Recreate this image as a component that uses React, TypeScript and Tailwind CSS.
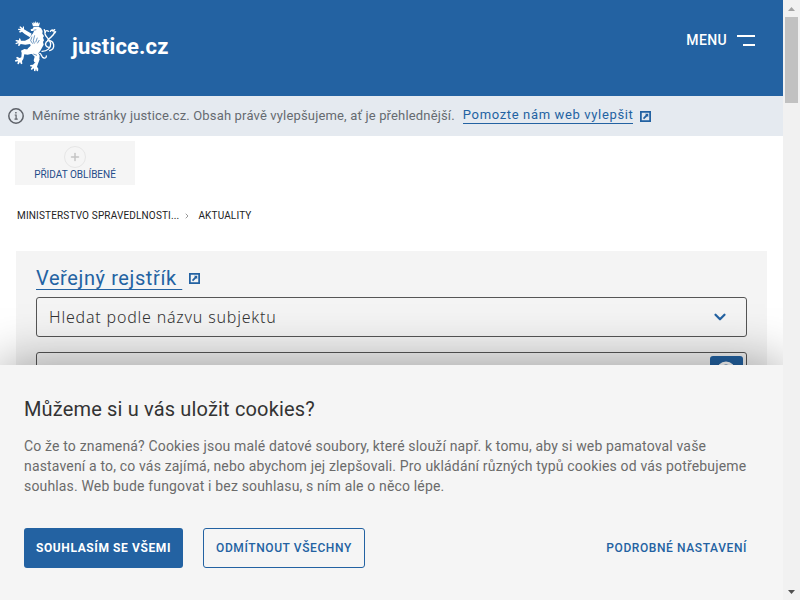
import { ChevronDown, ChevronRight, Plus, Search } from 'lucide-react'

// ─── Icons ────────────────────────────────────────────────────────────────────

function LionLogo() {
  return (
    <svg viewBox="0 0 150 180" className="h-15 w-[50px] text-white" fill="currentColor" aria-hidden="true">
      {/* crown */}
      <path d="M65 19l5 4 1-6 4 5 2-7 3 7 4-5 1 6 5-4-3 12H69z" />
      {/* head, mane and body */}
      <path d="M71 33l14-1 8 4 5 9-1 8 5 7-3 5 3 8-3 5 2 8-5 9-5 9-6 8 4 7-1 10-7 9-8 1-2-6 3-11-8-8-11-3-6-5 5-9 8-8-2-6-7-5 4-9 5-8 7-9 3-7-9 0-1-5 6-2z" />
      {/* raised front leg */}
      <path d="M60 64L44 54l-8-7-6 3-3-3 5-4-8-1 1-4 8 1-5-6 3-2 7 6 1-6 3 1 0 8 10 6 13 7z" />
      {/* lower front leg */}
      <path d="M60 84l-14 2-14-2-4 6-4-1 2-7-8 3-2-3 8-4-8-3 2-3 9 1 0-6 4 1 2 6 12 0 12-6 7 2z" />
      {/* striding back leg */}
      <path d="M66 113l-13 3-10-1-3 14-4 6 1 8-4 2-3-7-4 7-4-1 2-8-8 1-1-4 9-3-6-4 3-4 8 4 5-2 1-13-2-7 10-5 15 2 9-4z" />
      {/* standing back leg */}
      <path d="M78 122l11 8-5 13-3 9 4 6-1 8-4-1-2-7-2 8-4-1 0-8-7 5-3-3 5-7-7-1 1-4 8-1 7-7-1-8z" />
      {/* double tail */}
      <g fill="none" stroke="currentColor" strokeWidth="4" strokeLinecap="round">
        <path d="M89 112c6 0 4 12 13 14 5 1 7-2 7-6" />
        <path d="M96 106c16 0 27-10 26-23-1-13-14-18-17-29-2-8 5-13 10-8" />
        <path d="M119 104c8-2 13-9 12-18-2-12-14-16-22-8-6 8 0 16 8 16" />
        <path d="M113 73c6-9 20-13 20-24 0-8-8-9-12-3M106 49l-3-8M128 45l6-4M134 51l3-4" />
      </g>
      {/* mane and muscle lines */}
      <g fill="none" stroke="#2362a2" strokeWidth="2">
        <path d="M70 43l9-2M66 62l-4 12 6 9M74 58l-4 16 3 9M82 65l-5 14M88 72l-6 10M70 114l11 4" />
      </g>
    </svg>
  )
}

function ExternalIcon() {
  return (
    <svg viewBox="0 0 10 10" className="size-[11px] shrink-0 text-[#2362a2]" aria-hidden="true">
      <rect x=".8" y=".8" width="8.400" height="8.400" fill="none" stroke="currentColor" strokeWidth="1.600" />
      <path d="M4.500 2.500h3v3L6.600 4.700 3.700 7.400 2.700 6.400 5.400 3.500z" fill="currentColor" />
    </svg>
  )
}

function InfoIcon() {
  return (
    <svg viewBox="0 0 16 16" className="size-4 shrink-0 text-[#5d6168]" fill="none" stroke="currentColor" aria-hidden="true">
      <circle cx="8" cy="8" r="7.200" strokeWidth="1.500" />
      <path d="M6.700 7h1.400v4M6.500 11.200h3.200" strokeWidth="1.200" />
      <path d="M7.200 4.800h1.400" strokeWidth="1.500" />
    </svg>
  )
}

// ─── Page parts ───────────────────────────────────────────────────────────────

function Header() {
  return (
    <header className="flex h-24 items-start justify-between bg-[#2362a2] pr-7 pl-[10px] text-white">
      <a href="#" className="flex items-center gap-3 pt-4">
        <LionLogo />
        <span className="pt-[2px] text-[22px] leading-6 font-bold">justice.cz</span>
      </a>
      <button type="button" className="mt-7 flex h-6 items-center gap-[10px] text-sm font-medium tracking-wide">
        MENU
        <span className="flex w-[18px] flex-col items-end gap-[7px]">
          <span className="h-[2px] w-full bg-white" />
          <span className="h-[2px] w-3 bg-white" />
        </span>
      </button>
    </header>
  )
}

function Notice() {
  return (
    <div className="flex h-10 items-center bg-[#e5eaf0] px-2 text-[13px] leading-4 text-[#666a70]">
      <InfoIcon />
      <p className="ml-2">Měníme stránky justice.cz. Obsah právě vylepšujeme, ať je přehlednější.</p>
      <a href="#" className="mr-[7px] mb-[2px] ml-2 border-b border-[#2362a2] tracking-wider text-[#2362a2]">
        Pomozte nám web vylepšit
      </a>
      <ExternalIcon />
    </div>
  )
}

function Breadcrumbs() {
  return (
    <nav aria-label="Drobečková navigace" className="mt-[25px] flex items-center px-[17px] text-[10px] leading-3 text-[#222]">
      <a href="#">MINISTERSTVO SPRAVEDLNOSTI...</a>
      <ChevronRight className="mr-[7px] ml-1 size-2 text-[#999]" strokeWidth={3} />
      <span>AKTUALITY</span>
    </nav>
  )
}

function RegisterSearch() {
  return (
    <section className="mx-4 mt-[29px] bg-[#f4f4f4] px-5 pt-[15px] pb-40">
      <h2 className="flex items-center gap-[7px] text-[20px] leading-6 text-[#2362a2]">
        <a href="#" className="tracking-[0.03em] underline decoration-1 underline-offset-4">
          Veřejný rejstřík&nbsp;
        </a>
        <ExternalIcon />
      </h2>
      <div className="mt-[7px] grid">
        <select
          aria-label="Způsob hledání"
          className="col-start-1 row-start-1 h-10 w-full appearance-none rounded-[3px] border border-[#555] px-3 font-['Noto_Sans',sans-serif] text-base font-light tracking-wider text-[#333]"
        >
          <option>Hledat podle názvu subjektu</option>
        </select>
        <ChevronDown
          strokeWidth={3}
          className="pointer-events-none col-start-1 row-start-1 mr-[18px] size-[18px] self-center justify-self-end text-[#2362a2]"
        />
      </div>
      <form className="mt-[15px] flex h-10 rounded-[3px] border border-[#555] p-[3px]">
        <input aria-label="Hledaný výraz" className="min-w-0 flex-1 px-2 outline-none" />
        <button type="button" aria-label="Hledat" className="flex w-[33px] items-center justify-center rounded-[3px] bg-[#2362a2] text-white">
          <Search className="size-6" strokeWidth={3} />
        </button>
      </form>
    </section>
  )
}

function CookieBar() {
  return (
    <section
      aria-labelledby="cookie-title"
      className="absolute inset-x-0 bottom-0 bg-[#f5f5f5] px-6 pt-8 pb-8 shadow-[0_0_50px_rgba(0,0,0,0.4)]"
    >
      <h2 id="cookie-title" className="text-[20px] leading-6 text-[#333]">
        Můžeme si u vás uložit cookies?
      </h2>
      <p className="mt-[15px] text-sm leading-5 text-[#6b6b6b]">
        Co že to znamená? Cookies jsou malé datové soubory, které slouží např. k tomu, aby si web pamatoval vaše
        nastavení a to, co vás zajímá, nebo abychom jej zlepšovali. Pro ukládání různých typů cookies od vás potřebujeme
        souhlas. Web bude fungovat i bez souhlasu, s ním ale o něco lépe.
      </p>
      <div className="mt-8 flex h-10 gap-5 text-xs text-[#2362a2]">
        <button type="button" className="rounded-[3px] bg-[#2362a2] px-3 font-bold tracking-wider text-white">
          SOUHLASÍM SE VŠEMI
        </button>
        <button type="button" className="rounded-[3px] border border-[#2362a2] px-3 font-medium tracking-wider">
          ODMÍTNOUT VŠECHNY
        </button>
        <button type="button" className="mr-3 ml-auto font-medium tracking-wider">
          PODROBNÉ NASTAVENÍ
        </button>
      </div>
    </section>
  )
}

function Scrollbar() {
  return (
    <div className="flex w-[17px] shrink-0 flex-col items-center bg-[#f1f1f1]" aria-hidden="true">
      <span className="flex h-[17px] items-center">
        <svg viewBox="0 0 7 4" className="h-1 w-[7px]"><path d="M0 4l3.500-4L7 4z" fill="#a3a3a3" /></svg>
      </span>
      <span className="h-[86px] w-[13px] bg-[#c1c1c1]" />
      <span className="mt-auto flex h-[17px] items-center">
        <svg viewBox="0 0 7 4" className="h-1 w-[7px]"><path d="M0 0l3.500 4L7 0z" fill="#505050" /></svg>
      </span>
    </div>
  )
}

export default function App() {
  return (
    <div className="flex h-screen bg-white font-['Roboto',sans-serif] tracking-[0.01em]">
      <div className="relative min-w-0 flex-1 overflow-hidden">
        <Header />
        <main>
          <Notice />
          <button type="button" className="mt-[5px] ml-[15px] flex h-11 w-[120px] flex-col items-center bg-[#f5f5f5] pt-[5px] text-[10px] leading-3 tracking-normal text-[#1f4c8a]">
            <span className="mb-px flex size-[22px] items-center justify-center rounded-full border border-[#e6e6e6] text-[#c4c4c4]">
              <Plus className="size-3" strokeWidth={3} />
            </span>
            PŘIDAT OBLÍBENÉ
          </button>
          <Breadcrumbs />
          <RegisterSearch />
        </main>
        <CookieBar />
      </div>
      <Scrollbar />
    </div>
  )
}
